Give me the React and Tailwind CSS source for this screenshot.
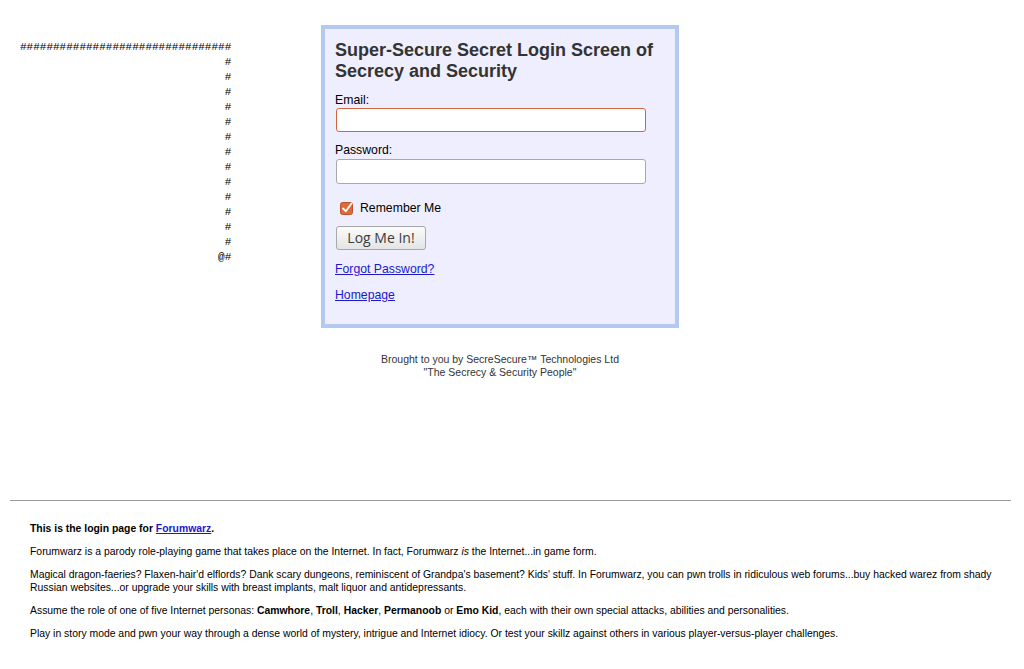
import React from "react";

const hashArt = [
  "################################",
  ...Array.from({ length: 13 }, () => " ".repeat(31) + "#"),
  " ".repeat(30) + "@#",
].join("\n");

function CheckBox() {
  return (
    <svg width="14" height="14" viewBox="0 0 14 14" className="shrink-0">
      <rect x="0.5" y="1.5" width="12" height="12" rx="2" fill="#e0693a" stroke="#b9542c" />
      <path d="M3 7.5 L5.8 10.2 L11.5 2.5" fill="none" stroke="#ffffff" strokeWidth="1.8" strokeLinecap="round" strokeLinejoin="round" />
    </svg>
  );
}

export default function App() {
  return (
    <div className="min-h-[669px] bg-white text-black" style={{ fontFamily: '"Liberation Sans", Arial, sans-serif' }}>
      <div className="w-[1000px] pt-[25px] grid grid-cols-[321px_358px] items-start">
        <pre
          className="mt-[15px] ml-[20px] text-[11px] leading-[15px] text-black whitespace-pre"
          style={{ fontFamily: '"Liberation Mono", "Courier New", monospace' }}
        >
          {hashArt}
        </pre>
        <div className="w-[358px] h-[303px] box-border border-4 border-[#b4c9ef] bg-[#eeeefe] px-[10px] pt-[11px]">
          <h1 className="text-[18px] font-bold leading-[21px] text-[#333333] m-0">
            Super-Secure Secret Login Screen of Secrecy and Security
          </h1>
          <label className="block mt-[11px] text-[12.25px] leading-[15px] text-black">Email:</label>
          <div className="ml-[1px] w-[310px] h-[24px] box-border rounded-[3px] border border-[#d4643a] bg-white"></div>
          <label className="block mt-[10px] text-[12.25px] leading-[16px] text-black">Password:</label>
          <div className="ml-[1px] mt-[1px] w-[310px] h-[25px] box-border rounded-[3px] border border-[#a9a9a9] bg-white"></div>
          <div className="mt-[15px] h-[18px] flex items-center ml-[5px] gap-[6px]">
            <CheckBox />
            <span className="text-[12.25px] leading-[16px] text-black">Remember Me</span>
          </div>
          <div className="mt-[9px] ml-[1px]">
            <button
              className="w-[90px] h-[24px] box-border rounded-[3px] border border-[#a8a8a8] bg-gradient-to-b from-[#fbfbfb] to-[#e4e4e4] text-[14px] leading-[20px] text-[#3c3c3c]"
              style={{ fontFamily: '"Open Sans", "DejaVu Sans", sans-serif' }}
            >
              Log Me In!
            </button>
          </div>
          <div className="mt-[11px] text-[12.25px] leading-[16px]">
            <a href="#" className="text-[#1a1acc] underline">Forgot Password?</a>
          </div>
          <div className="mt-[10px] text-[12.25px] leading-[16px]">
            <a href="#" className="text-[#1a1acc] underline">Homepage</a>
          </div>
        </div>
      </div>

      <div className="w-[1000px] mt-[25px] text-center text-[10.5px] leading-[13px] text-[#333333]">
        <p>Brought to you by SecreSecure™ Technologies Ltd</p>
        <p>"The Secrecy &amp; Security People"</p>
      </div>

      <hr className="mt-[121px] ml-[10px] w-[1001px] border-0 border-t border-[#9a9a9a]" />

      <div className="pl-[30px] pr-[10px] w-[1011px] pt-[21px] text-[10.4px] leading-[13px] text-black">
        <p className="font-bold">
          This is the login page for <a href="#" className="text-[#1a1acc] underline">Forumwarz</a>.
        </p>
        <p className="mt-[10px]">
          Forumwarz is a parody role-playing game that takes place on the Internet. In fact, Forumwarz <i>is</i> the Internet...in game form.
        </p>
        <p className="mt-[10px]">
          Magical dragon-faeries? Flaxen-hair'd elflords? Dank scary dungeons, reminiscent of Grandpa's basement? Kids' stuff. In Forumwarz, you can pwn trolls in ridiculous web forums...buy hacked warez from shady Russian websites...or upgrade your skills with breast implants, malt liquor and antidepressants.
        </p>
        <p className="mt-[10px]">
          Assume the role of one of five Internet personas: <b>Camwhore</b>, <b>Troll</b>, <b>Hacker</b>, <b>Permanoob</b> or <b>Emo Kid</b>, each with their own special attacks, abilities and personalities.
        </p>
        <p className="mt-[10px]">
          Play in story mode and pwn your way through a dense world of mystery, intrigue and Internet idiocy. Or test your skillz against others in various player-versus-player challenges.
        </p>
      </div>
    </div>
  );
}
